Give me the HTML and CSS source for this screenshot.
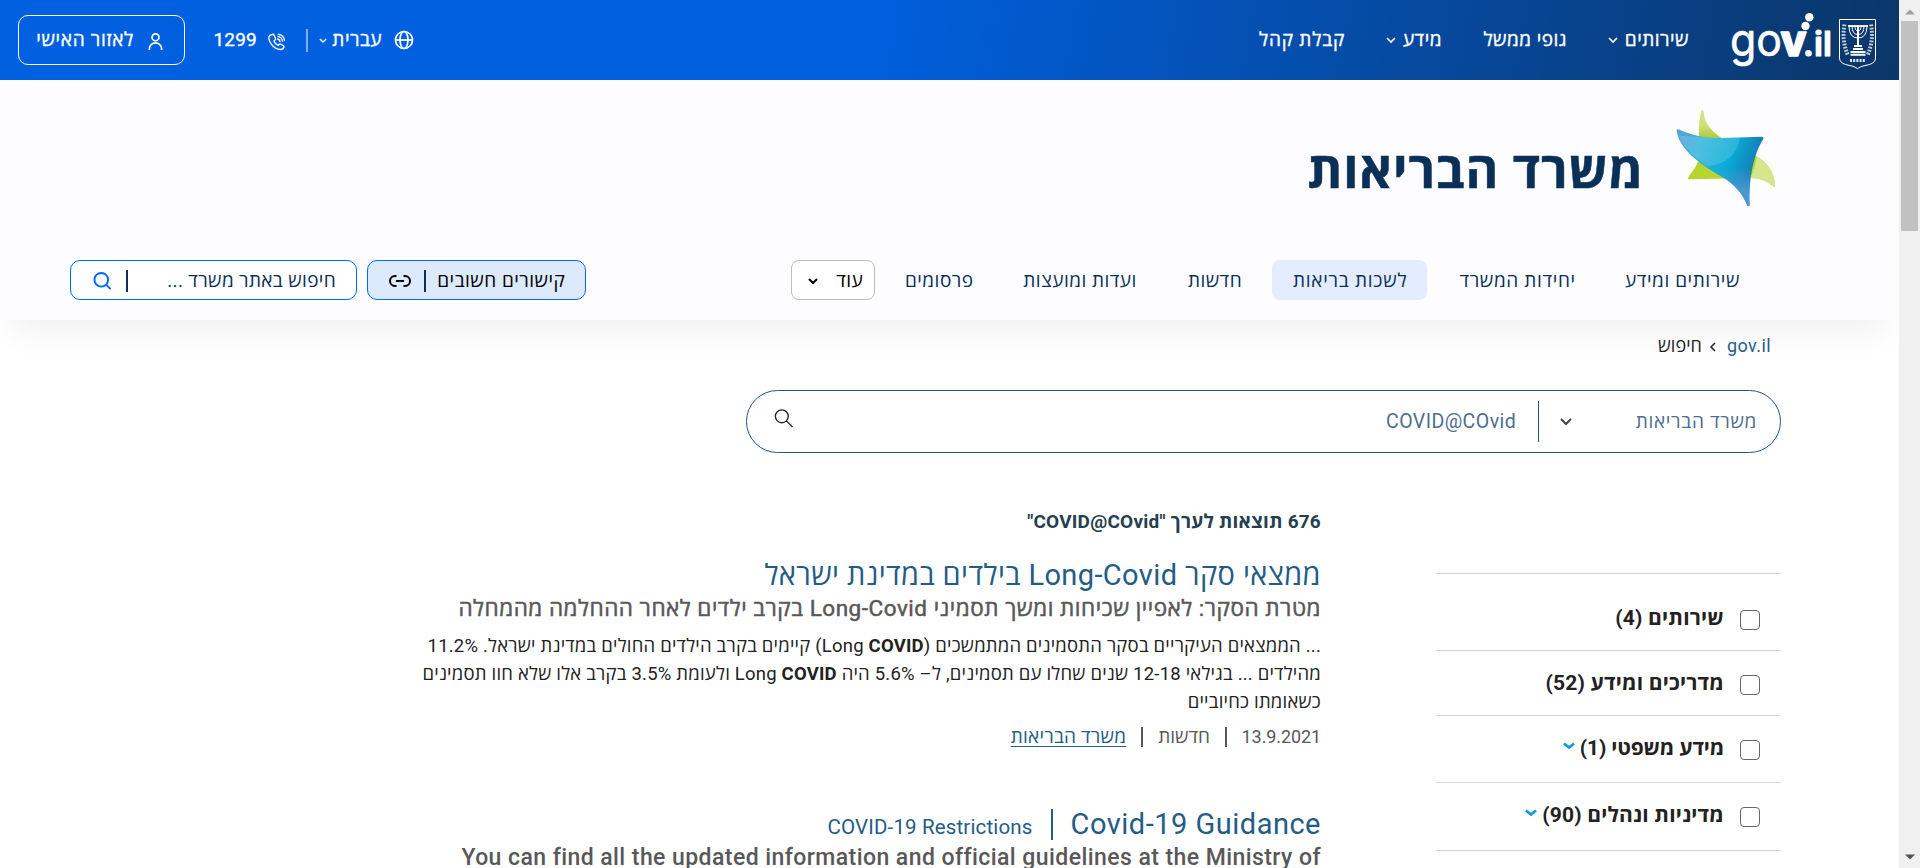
FILE: index.html
```html
<!DOCTYPE html>
<html lang="he" dir="rtl">
<head>
<meta charset="utf-8">
<title>משרד הבריאות - חיפוש</title>
<link rel="stylesheet" href="styles.css">
</head>
<body>
<div class="window">
  <div class="scrollbar">
    <svg class="sb-arrow" viewBox="0 0 10 6"><path d="M0 5.5 5 .5l5 5z" fill="#a0a0a0"/></svg>
    <div class="sb-thumb"></div>
    <svg class="sb-arrow sb-down" viewBox="0 0 10 6"><path d="M0 .5h10l-5 5z" fill="#505050"/></svg>
  </div>
  <div class="page">
    <header class="topbar">
      <svg class="govlogo" viewBox="0 0 145 60" direction="ltr">
        <g fill="none" stroke="#fff" stroke-width="1">
          <path d="M107.500 9.500h36v38.500q0 4.500-6 6.500-9 1.500-12 4-3-2.500-12-4-6-2-6-6.500z"/>
          <path d="M117 16q0 12 9 12t9-12M120 16q0 8.500 6 8.500t6-8.500M123 16q0 5 3 5t3-5"/>
          <path d="M126 15v20" stroke-width="2"/>
          <path d="M116 16h20" stroke-width="1.800"/>
          <path d="M122 36h8M121 39h10M118.500 42h15M118.500 44.800h15" stroke-width="2"/>
          <path d="M112.500 14.500q-3 16 3.500 31M139 14.500q3 16-3.500 31" stroke-width="4" stroke-dasharray="1.800 1.400" opacity=".75"/>
          <path d="M118 50.500h16" stroke-dasharray="2 1.200" stroke-width="3" opacity=".9"/>
        </g>
        <g class="wordmark">
          <text x="-2" y="46" textLength="52" lengthAdjust="spacingAndGlyphs">go</text>
          <text class="wm-bold" x="48.500" y="46" textLength="26" lengthAdjust="spacingAndGlyphs">v</text>
          <text class="wm-mid" x="71" y="46" textLength="29" lengthAdjust="spacing">.il</text>
        </g>
        <g fill="#fff"><circle cx="77.300" cy="7.200" r="4.200"/><circle cx="73.500" cy="16" r="4.200"/></g>
      </svg>
      <nav class="topnav">
        <span class="tn"><span class="t w64">שירותים</span><svg class="chev" viewBox="0 0 10 6"><path d="M1 1l4 4 4-4"/></svg></span>
        <span class="t w84">גופי ממשל</span>
        <span class="tn"><span class="t w39">מידע</span><svg class="chev" viewBox="0 0 10 6"><path d="M1 1l4 4 4-4"/></svg></span>
        <span class="t w86">קבלת קהל</span>
      </nav>
      <div class="tools">
        <svg class="globe" viewBox="0 0 20 20"><circle cx="10" cy="10" r="8.500"/><ellipse cx="10" cy="10" rx="4" ry="8.500"/><path d="M1.500 10h17"/></svg>
        <span class="t w50">עברית</span>
        <svg class="chev small" viewBox="0 0 10 6"><path d="M1 1l4 4 4-4"/></svg>
        <span class="tdiv"></span>
        <svg class="phone" viewBox="0 0 20 20"><path d="M5.500 1.500 2.800 2.600C.8 4 1 8 4 12s7 6.300 10.500 6.300c2 0 3.300-1 3.700-2.500.2-.8 0-1.300-.7-1.800l-2.600-1.500c-.8-.4-1.400-.3-2 .3l-.9 1c-2-.7-4.200-3.200-4.800-5l1.200-1c.6-.6.7-1.200.4-2L7.300 2.500c-.4-.9-1-1.300-1.800-1z"/><path d="M10.500 6.500q3 .3 3.500 3.500M11 3.800q5 .5 5.700 5.700M11.500 1.200q7 .8 7.500 7.800"/></svg>
        <span class="t num">1299</span>
        <a class="personal"><svg viewBox="0 0 16 20"><circle cx="8" cy="5.500" r="3.700"/><path d="M1.500 19v-1.500a6.500 6 0 0 1 13 0V19"/></svg><span class="t w98">לאזור האישי</span></a>
      </div>
    </header>

    <div class="office">
      <div class="brand">
        <svg class="star" viewBox="105 325 305 300">
          <defs>
            <linearGradient id="b" x1="0" y1="0" x2="1" y2=".3"><stop offset="0" stop-color="#5a9fd8"/><stop offset=".3" stop-color="#30b4dc"/><stop offset=".65" stop-color="#08acd6"/><stop offset="1" stop-color="#1678b0"/></linearGradient>
            <linearGradient id="d" x1="0" y1="0" x2="0" y2="1"><stop offset=".5" stop-color="#4a98d0" stop-opacity="0"/><stop offset=".8" stop-color="#4a98d0"/></linearGradient>
            <linearGradient id="g" x1="0" y1="0" x2="0" y2="1"><stop offset="0" stop-color="#d2e284"/><stop offset=".2" stop-color="#cfe07a"/><stop offset=".4" stop-color="#a6c62c"/><stop offset=".75" stop-color="#b6d52e"/></linearGradient>
          </defs>
          <path d="M184 331q6-2 7 8c2 36 28 59 59 80l98 51c32 16 53 44 57 88q0 6-6 2c-18-15-38-25-68-25l-180 4q-11 1-6-7c13-20 30-36 31-60V405q-1-40 8-74z" fill="url(#g)"/>
          <path d="M331 534q17-36 18-63c30 13 52 44 56 86q0 6-6 3-30-25-68-26z" fill="#d6e68c"/>
          <path d="M109 390q3-3 9 0c37 17 80 26 130 25l115-4q10 0 6 8c-30 45-44 126-41 194q0 11-7 4c-16-40-38-61-73-84-70-41-131-83-139-143z" fill="url(#b)"/>
          <path d="M109 390q3-3 9 0c37 17 80 26 130 25l115-4q10 0 6 8c-30 45-44 126-41 194q0 11-7 4c-16-40-38-61-73-84-70-41-131-83-139-143z" fill="url(#d)"/>
          <path d="M177 411q35 5 71 4l52-2c-7 48-42 83-99 86q-62-37-87-92 20 3 63 4z" fill="#fff" opacity=".15"/>
        </svg>
        <h1 class="ministry">משרד הבריאות</h1>
      </div>
      <div class="navrow">
        <span class="ni"><span class="t s5 w114">שירותים ומידע</span></span>
        <span class="ni"><span class="t s6 w118">יחידות המשרד</span></span>
        <span class="ni on"><span class="t s7 w114">לשכות בריאות</span></span>
        <span class="ni"><span class="t w55">חדשות</span></span>
        <span class="ni"><span class="t w113">ועדות ומועצות</span></span>
        <span class="ni"><span class="t w68">פרסומים</span></span>
        <span class="more"><span class="t">עוד</span><svg class="chev dark" viewBox="0 0 10 6"><path d="M1 1l4 4 4-4"/></svg></span>
        <span class="links"><span class="t w127">קישורים חשובים</span><i></i><svg viewBox="0 0 22 14"><path d="M7.500 2H6a5 5 0 0 0 0 10h1.500M14.500 2H16a5 5 0 0 1 0 10h-1.500M7 7h8"/></svg></span>
        <span class="sitesearch"><span class="t w168">חיפוש באתר משרד ...</span><i></i><svg viewBox="0 0 20 20"><circle cx="8.700" cy="8.700" r="7.200"/><path d="M14 14l4.500 4.500"/></svg></span>
      </div>
    </div>

    <main class="main">
      <div class="crumbs"><a>gov.il</a><svg viewBox="0 0 6 10"><path d="M5 1 1 5l4 4"/></svg><span>חיפוש</span></div>
      <div class="search">
        <span class="t w121">משרד הבריאות</span>
        <svg class="chev mid" viewBox="0 0 12 8"><path d="M1 1l5 5 5-5"/></svg>
        <i></i>
        <span class="query" dir="ltr">COVID@COvid</span>
        <svg class="lens" viewBox="0 0 20 20"><circle cx="7.700" cy="7.700" r="6.800"/><path d="M12.500 12.500l6.500 6.500"/></svg>
      </div>
      <div class="cols">
        <aside class="filters">
          <div class="f f1"><span class="box"></span><b>שירותים (4)</b></div>
          <div class="f f2"><span class="box"></span><b>מדריכים ומידע (52)</b></div>
          <div class="f f3"><span class="box"></span><b>מידע משפטי (1)</b><svg class="chev blue" viewBox="0 0 12 8"><path d="M1 1.500l5 4 5-4"/></svg></div>
          <div class="f f4"><span class="box"></span><b>מדיניות ונהלים (90)</b><svg class="chev blue" viewBox="0 0 12 8"><path d="M1 1.500l5 4 5-4"/></svg></div>
        </aside>
        <section class="results">
          <div class="count">676 תוצאות לערך "COVID@COvid"</div>
          <article class="hit">
            <h2>ממצאי סקר Long-Covid בילדים במדינת ישראל</h2>
            <h3>מטרת הסקר: לאפיין שכיחות ומשך תסמיני Long-Covid בקרב ילדים לאחר ההחלמה מהמחלה</h3>
            <p>... הממצאים העיקריים בסקר התסמינים המתמשכים (Long <strong>COVID</strong>) קיימים בקרב הילדים החולים במדינת ישראל. 11.2%<br>מהילדים ... בגילאי 12-18 שנים שחלו עם תסמינים, ל– 5.6% היה Long <strong>COVID</strong> ולעומת 3.5% בקרב אלו שלא חוו תסמינים<br>כשאומתו כחיוביים</p>
            <div class="meta"><span class="date">13.9.2021</span><i></i><span>חדשות</span><i></i><a>משרד הבריאות</a></div>
          </article>
          <article class="hit">
            <div class="titles"><h2 class="en" dir="ltr">Covid-19 Guidance</h2><i></i><a dir="ltr">COVID-19 Restrictions</a></div>
            <h3 class="en" dir="ltr">You can find all the updated information and official guidelines at the Ministry of</h3>
          </article>
        </section>
      </div>
    </main>
  </div>
</div>
</body>
</html>
```
FILE: styles.css
```css
* { box-sizing: border-box; }
body { margin: 0; font-family: Roboto, "Open Sans", sans-serif; font-size: 19px; line-height: 28px; background: #fff; overflow: hidden; }
h1, h2, h3, p { margin: 0; }
svg { display: block; flex: none; fill: none; overflow: visible; }
i { flex: none; }
.window { display: flex; width: 1920px; height: 868px; overflow: hidden; }
.page { width: 1899px; overflow: hidden; }
.scrollbar { width: 21px; background: #f0f0f0; display: flex; flex-direction: column; align-items: center; padding: 9px 0 8px; flex: none; }
.sb-arrow { width: 10px; height: 6px; }
.sb-thumb { width: 17px; height: 210px; margin-top: 6px; background: #c1c1c1; }
.sb-down { margin-top: auto; }

.t { display: block; white-space: nowrap; letter-spacing: .48px; flex: none; }
.w39 { width: 39px; } .w50 { width: 50px; } .w55 { width: 55px; } .w64 { width: 64px; } .w68 { width: 68px; }
.w84 { width: 84px; } .w86 { width: 86px; letter-spacing: .8px; } .w98 { width: 98px; letter-spacing: .7px; }
.w113 { width: 113px; } .w114 { width: 114px; } .w118 { width: 118px; } .w121 { width: 121px; letter-spacing: .69px; }
.w127 { width: 127px; } .w168 { width: 168px; letter-spacing: .35px; }
.s5 { letter-spacing: .58px; } .s6 { letter-spacing: .65px; } .s7 { letter-spacing: .75px; }
.chev { width: 10px; height: 6px; stroke: #fff; stroke-width: 1.7; }

.topbar { height: 80px; display: flex; align-items: center; padding: 0 22px 0 18px; color: #fff; background: linear-gradient(100deg, #0060df 0%, #0060df 45%, #0b3668 100%); }
.govlogo { width: 145px; height: 60px; }
.wordmark { fill: #fff; direction: ltr; font: 400 46px Inter, sans-serif; }
.wordmark text { stroke: #fff; stroke-width: .6; stroke-linejoin: round; }
.wordmark .wm-bold { font-size: 44px; font-weight: 800; stroke-width: 1.500; }
.wordmark .wm-mid { font-size: 34px; font-weight: 600; stroke-width: 1.200; }
.topnav { display: flex; gap: 41px; margin-right: 43px; align-items: center; }
.topnav .t, .tools .t { -webkit-text-stroke: .35px #fff; }
.tn { display: flex; gap: 7px; align-items: center; }
.tools { display: flex; align-items: center; margin-right: auto; }
.globe { width: 20px; height: 20px; stroke: #fff; stroke-width: 1.7; margin-left: 12px; }
.chev.small { width: 8px; height: 5px; margin-right: 5px; }
.tdiv { width: 2px; height: 23px; background: #7fb0f0; margin: 0 11px 0 20px; }
.phone { width: 19px; height: 18px; stroke: #fff; stroke-width: 1.5; margin-top: 3px; }
.tools .num { width: 44px; margin: 0 10px 0 28px; letter-spacing: .2px; }
.personal { width: 167px; height: 50px; border: 1px solid #fff; border-radius: 10px; display: flex; align-items: center; gap: 14px; padding-right: 21px; }
.personal svg { width: 15px; height: 19px; stroke: #fff; stroke-width: 1.8; margin-top: 3px; }
.tools .globe { margin-right: 0; }

.office { height: 240px; background: #fdfdff; position: relative; box-shadow: 0 24px 30px -12px rgba(0,0,0,.06); }
.brand { height: 180px; padding: 28px 122px 0 0; display: flex; gap: 31px; }
.star { width: 102px; height: 100px; }
.ministry { font-size: 50px; line-height: 60px; letter-spacing: .95px; color: #0b3058; padding-top: 33px; -webkit-text-stroke: .5px #0b3058; }
.navrow { display: flex; gap: 10.3px; height: 40px; padding: 0 139px 0 70px; color: #0b3058; }
.ni { padding: 7px 20px 0; height: 40px; border-radius: 8px; }
.on { background: #e3edff; width: 155px; }
.more { width: 84px; border: 1px solid #b4bfcc; border-radius: 8px; background: #fff; color: #000; display: flex; align-items: center; padding: 2px 11px 0 0; gap: 18px; }
.more .chev { stroke: #000; stroke-width: 2; }
.links, .sitesearch { border: 1px solid #0068f5; border-radius: 10px; display: flex; align-items: center; padding: 1px 20px 0 0; }
.links { width: 219px; background: #dde9fd; color: #000; margin-right: auto; }
.sitesearch { width: 287px; background: #fff; }
.links i, .sitesearch i { width: 2px; height: 22px; background: #0b3058; margin-right: 12px; }
.sitesearch i { margin-right: 40px; }
.links svg { width: 22px; height: 14px; stroke: #000; stroke-width: 2; margin-right: 13px; }
.sitesearch svg { width: 19px; height: 20px; stroke: #0068f5; stroke-width: 2; margin-right: 14px; }

.crumbs { display: flex; align-items: center; height: 28px; margin: 12px 128px 0 0; position: relative; color: #222; letter-spacing: .1px; font-size: 18px; }
.crumbs a { color: #235c85; width: 43px; letter-spacing: .4px; }
.crumbs svg { width: 6px; height: 10px; stroke: #222; stroke-width: 1.500; margin: 1px 12px 0 8px; }
.search { width: 1035px; height: 63px; margin: 30px 118px 0 0; border: 1px solid #1d567f; border-radius: 32px; display: flex; align-items: center; padding: 0 23px 0 27px; color: #4e6e8e; }
.search .mid { width: 12px; height: 8px; margin-right: 64px; stroke: #444; stroke-width: 2; }
.search i { width: 1px; height: 41px; background: #1d567f; margin-right: 21px; }
.query { font-size: 19.500px; letter-spacing: .45px; width: 130px; margin-right: 22px; }
.lens { width: 20px; height: 19px; stroke: #222; stroke-width: 1.4; margin: 0 auto 7px 0; }
.cols { display: flex; gap: 115px; margin-right: 118px; }
.filters { width: 345px; margin-top: 120px; flex: none; border-top: 1px solid #d8d8d8; color: #222; font-size: 21px; letter-spacing: .2px; }
.f { border-bottom: 1px solid #d8d8d8; display: flex; align-items: center; padding-right: 21px; }
.f1 { height: 77px; padding-top: 12px; } .f2 { height: 65px; } .f3 { height: 67px; padding-bottom: 2px; letter-spacing: -.15px; } .f4 { height: 68px; padding-bottom: 3px; }
.box { width: 20px; height: 20px; border: 1px solid #666; border-radius: 4px; margin: 4px 0 0 16px; }
.blue { width: 12px; height: 8px; stroke: #1296dc; stroke-width: 2.800; margin: 0 5px 4px 0; }
.results { width: 905px; padding-top: 55px; white-space: nowrap; flex: none; }
.count { font-weight: 700; letter-spacing: .22px; color: #243f4f; margin-bottom: 21px; }
h2 { font-size: 29px; line-height: 36px; font-weight: 400; letter-spacing: .39px; color: #235c85; }
h3 { font-size: 22.500px; line-height: 31px; font-weight: 400; letter-spacing: .53px; color: #585858; -webkit-text-stroke: .5px #585858; }
h2.en { letter-spacing: .5px; }
h3.en { font-size: 23px; font-weight: 500; letter-spacing: .43px; text-align: right; -webkit-text-stroke: 0; }
.hit p { font-size: 18.500px; line-height: 28px; letter-spacing: .21px; color: #222; margin-top: 8px; }
.meta { display: flex; align-items: center; height: 30px; margin-top: 6px; color: #585858; }
.meta .date { font-size: 18px; width: 79px; letter-spacing: -.1px; }
.meta i { width: 2px; height: 20px; background: #585858; margin: 0 15px; }
.meta a { color: #235c85; text-decoration: underline; letter-spacing: .2px; text-underline-offset: 3px; }
.titles { display: flex; margin-top: 54px; align-items: baseline; }
.titles i { width: 2px; height: 31px; background: #235c85; margin: 0 18px; align-self: center; }
.titles a { color: #235c85; font-size: 20.500px; letter-spacing: .15px; }
```
